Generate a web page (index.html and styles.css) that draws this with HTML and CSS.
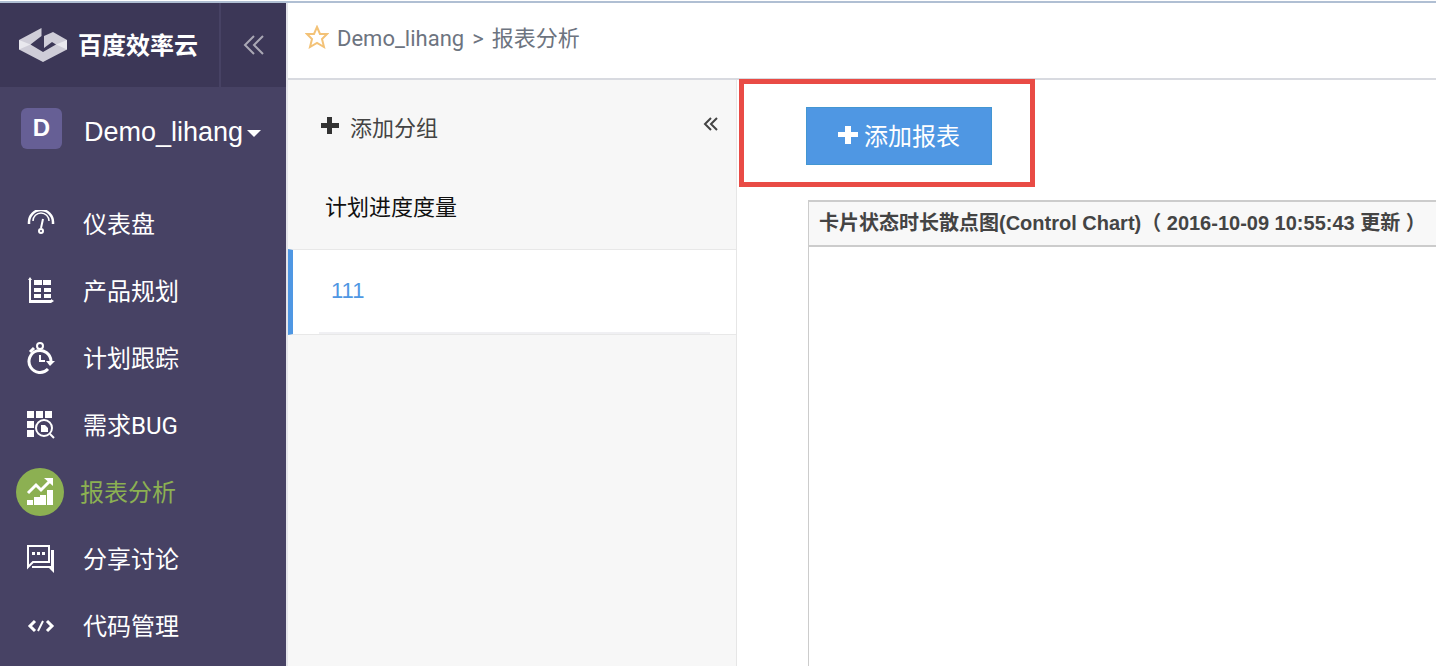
FILE: index.html
```html
<!DOCTYPE html>
<html lang="zh-CN">
<head>
<meta charset="UTF-8">
<meta name="viewport" content="width=device-width, initial-scale=1.0">
<title>报表分析 - 百度效率云</title>
<link rel="stylesheet" href="styles.css">
</head>
<body>
<div class="app">
  <aside class="sidebar">
    <div class="brand">
      <a class="logo" href="#">
        <svg width="48" height="34" viewBox="0 0 48 34">
          <path fill="#cfcdd8" d="M0 12L22.500 0v8L11.500 16.500 24 24l13-7.500-4-2.500-8 6V8l9-4 14 8v9.500L24 34 0 21.500z"/>
          <path fill="#e9e8ee" d="M0 12l11.500 4.500L0 21.500zM48 12l-11 4.500 11 5z"/>
        </svg>
        <span>百度效率云</span>
      </a>
      <button class="fold" aria-label="收起菜单">
        <svg width="22" height="20" viewBox="0 0 22 20" fill="none" stroke="#aaa8b5" stroke-width="2"><path d="M11 1L2 10l9 9M20 1l-9 9 9 9"/></svg>
      </button>
    </div>
    <button class="project">
      <span class="badge">D</span>
      <span class="project-name">Demo_lihang</span>
      <span class="caret"></span>
    </button>
    <nav>
      <ul class="menu">
        <li><a href="#">
          <span class="icon"><svg width="28" height="28" viewBox="0 0 28 28" fill="none" stroke="#fff"><path stroke-width="2.500" d="M2 14v-2a12 12 0 0 1 24 0v2"/><path stroke-width="1.500" d="M6 11a8 8 0 0 1 16 0"/><path stroke-width="2" d="M16 9l-2 9"/><circle cx="14" cy="21" r="2" stroke-width="2"/></svg></span>
          <span>仪表盘</span></a></li>
        <li><a href="#">
          <span class="icon"><svg width="28" height="28" viewBox="0 0 28 28" fill="#fff"><path d="M1 3l2-3 2 3H4v20h20v-1l3 2-3 2H2V3zM7 3h8v5H7zM16 3h8v5h-8zM7 11h7v4H7zM17 11h7v4h-7zM7 17h7v4H7zM17 17h7v4h-7z"/></svg></span>
          <span>产品规划</span></a></li>
        <li><a href="#">
          <span class="icon"><svg width="28" height="32" viewBox="0 0 28 32" fill="none" stroke="#fff"><path stroke-width="3" d="M24 19A11 11 0 1 0 21 27"/><circle cx="13" cy="4" r="3" stroke-width="2"/><path stroke-width="3" d="M3 10l4-4"/><path stroke-width="2" d="M13 13v6h5"/><path fill="#fff" stroke="none" d="M19 19h9l-5 5z"/></svg></span>
          <span>计划跟踪</span></a></li>
        <li><a href="#">
          <span class="icon"><svg width="28" height="28" viewBox="0 0 28 28" fill="#fff"><path d="M0 0h7v7H0zM9 0h7v7H9zM18 0h7v7h-7zM0 10h7v7H0zM0 19h7v7H0zM14 14h4l3 3v4h-7z"/><circle cx="17" cy="17" r="8" fill="none" stroke="#fff" stroke-width="2"/><path fill="none" stroke="#fff" stroke-width="2" d="M23 23l4 4"/></svg></span>
          <span>需求BUG</span></a></li>
        <li class="active"><a href="#">
          <span class="icon"><svg width="28" height="28" viewBox="0 0 28 28" fill="#fff"><path fill="none" stroke="#fff" stroke-width="3" d="M2 15l8-8 5 5 9-9"/><path d="M18 0h9v8zM1 22h6v5H1zM8 19h6v8H8zM14 17h6v10h-6zM21 12h6v15h-6z"/></svg></span>
          <span>报表分析</span></a></li>
        <li><a href="#">
          <span class="icon"><svg width="28" height="28" viewBox="0 0 28 28" fill="#fff"><path fill="none" stroke="#fff" stroke-width="2" d="M1 1h21v16H6l-5 5z"/><path d="M5 7h3v3H5zM10 7h3v3h-3zM15 7h3v3h-3zM24 5h3v23l-5-5H5v-2h19z"/></svg></span>
          <span>分享讨论</span></a></li>
        <li><a href="#">
          <span class="icon"><svg width="28" height="14" viewBox="0 0 28 14" fill="none" stroke="#fff" stroke-width="2"><path stroke-width="3" d="M8 2L3 7l5 5M20 2l5 5-5 5"/><path d="M16 2l-5 10"/></svg></span>
          <span>代码管理</span></a></li>
      </ul>
    </nav>
  </aside>

  <div class="page">
    <header class="crumbs">
      <svg width="24" height="24" viewBox="0 0 24 24" fill="none" stroke="#f3c277" stroke-width="2"><path d="M12 2l3 7h7l-5 5 2 8-7-4-7 4 2-8-5-5h7z"/></svg>
      <div class="path">
        <span>Demo_lihang</span>
        <span>&gt;</span>
        <span>报表分析</span>
      </div>
    </header>
    <div class="columns">
      <section class="groups">
        <div class="groups-top">
          <button class="add-group">
            <svg width="18" height="18" viewBox="0 0 18 18" fill="#333"><path d="M6 0h5v6h7v5h-7v6H6v-6H0V6h6z"/></svg>
            添加分组
          </button>
          <button class="fold-groups" aria-label="收起分组">
            <svg width="16" height="14" viewBox="0 0 16 14" fill="none" stroke="#444" stroke-width="2"><path d="M8 1L2 7l6 6M14 1L8 7l6 6"/></svg>
          </button>
        </div>
        <h2 class="group-title">计划进度度量</h2>
        <a class="group-item" href="#"><span>111</span></a>
      </section>
      <main class="content">
        <div class="add-wrap">
          <button class="add-report">
            <svg width="20" height="20" viewBox="0 0 20 20" fill="#fff"><path d="M7 1h6v6h7v5h-7v7H7v-7H0V7h7z"/></svg>
            添加报表
          </button>
          <div class="mark"></div>
        </div>
        <section class="chart">
          <h3>卡片状态时长散点图(Control Chart)（ 2016-10-09 10:55:43 更新 ）</h3>
        </section>
      </main>
    </div>
  </div>
</div>
</body>
</html>
```
FILE: styles.css
```css
* {
  box-sizing: border-box;
}
body {
  margin: 0;
  padding: 1px 4px 0 0;
  background-color: #fff;
  font-family: "Liberation Sans", "Noto Sans CJK SC", sans-serif;
}
button {
  border: none;
  background: none;
  padding: 0;
  font-family: inherit;
  cursor: pointer;
}
a {
  text-decoration: none;
}
svg {
  flex: none;
}
.app {
  display: flex;
  min-height: calc(100vh - 1px);
  border-top: 2px solid #b0bfd3;
}

/* menu */
.sidebar {
  flex: none;
  width: 286px;
  background-color: #474264;
  color: #fff;
}
.brand {
  display: flex;
  height: 84px;
  background-color: #3c3757;
}
.logo {
  display: flex;
  align-items: center;
  flex: 1;
  gap: 11px;
  padding-left: 19px;
  color: #fff;
  font-size: 24px;
  font-weight: bold;
}
.logo span {
  padding-bottom: 3px;
}
.fold {
  display: flex;
  align-items: center;
  justify-content: center;
  width: 67px;
  border-left: 2px solid #474264;
}
.project {
  display: flex;
  align-items: center;
  width: 100%;
  padding: 21px 0 0 21px;
  color: #fff;
  font-size: 27px;
}
.badge {
  width: 41px;
  height: 41px;
  border-radius: 6px;
  background-color: #665f95;
  font-size: 24px;
  font-weight: bold;
  line-height: 40px;
}
.project-name {
  padding: 7px 4px 0 22px;
}
.caret {
  margin-top: 9px;
  border: 7px solid transparent;
  border-top-color: #fff;
  border-bottom: none;
}
.menu {
  list-style: none;
  margin: 0;
  padding: 41px 0 0 16px;
}
.menu a {
  display: flex;
  align-items: center;
  gap: 19px;
  height: 67px;
  color: #fff;
  font-family: Roboto, "Noto Sans CJK SC", sans-serif;
  font-size: 24px;
}
.menu a span:last-child {
  padding-bottom: 3px;
}
.icon {
  display: flex;
  align-items: center;
  justify-content: center;
  width: 48px;
  height: 48px;
  padding-left: 2px;
}
.active .icon {
  padding-left: 0;
  border-radius: 50%;
  background-color: #8cb052;
}
.menu .active a {
  gap: 16px;
  color: #8cb052;
}

/* page */
.page {
  display: flex;
  flex-direction: column;
  flex: 1;
  min-width: 0;
  border-left: 2px solid #e4e4ea;
}
.crumbs {
  display: flex;
  align-items: center;
  gap: 8px;
  height: 77px;
  padding: 0 0 7px 17px;
  border-bottom: 2px solid #d8dae0;
  color: #6d7480;
  font-family: Roboto, "Noto Sans CJK SC", sans-serif;
  font-size: 22px;
}
.path {
  display: flex;
  align-items: baseline;
  gap: 8px;
  padding-bottom: 2px;
}
.columns {
  display: flex;
  flex: 1;
}
.groups {
  flex: none;
  width: 449px;
  background-color: #f7f7f7;
  border-right: 1px solid #e6e6e6;
}
.groups-top {
  display: flex;
  align-items: center;
  justify-content: space-between;
  height: 96px;
  padding: 0 17px 5px 33px;
}
.add-group {
  display: flex;
  align-items: center;
  gap: 11px;
  color: #444;
  font-size: 22px;
}
.group-title {
  margin: 0;
  padding-left: 37px;
  color: #111;
  font-size: 22px;
  font-weight: normal;
  line-height: 64px;
  padding-bottom: 9px;
}
.group-item {
  display: block;
  padding: 0 26px;
  border: 1px solid #e8e8e8;
  border-left: 5px solid #4f97e3;
  border-right: none;
  background-color: #fff;
  color: #4f97e3;
  font-size: 22px;
  line-height: 82px;
}
.group-item span {
  display: block;
  padding-left: 12px;
  border-bottom: 2px solid #f0f0f3;
}
.content {
  display: flex;
  flex-direction: column;
  flex: 1;
  min-width: 0;
  padding: 27px 0 0 69px;
}
.add-wrap {
  position: relative;
  align-self: flex-start;
}
.add-report {
  display: flex;
  align-items: center;
  justify-content: center;
  gap: 6px;
  width: 186px;
  height: 58px;
  padding-bottom: 3px;
  border: 1px solid #4396d2;
  background-color: #4f97e3;
  color: #fff;
  font-size: 24px;
}
/* red frame round the button */
.mark {
  position: absolute;
  inset: -28px -43px -22px -67px;
  border: 5px solid #e94b45;
  pointer-events: none;
}
.chart {
  flex: 1;
  margin: 35px 0 0 2px;
  border-top: 2px solid #ccc;
  border-left: 1px solid #ccc;
}
.chart h3 {
  margin: 0;
  padding-left: 10px;
  border-bottom: 2px solid #ccc;
  background-color: #f8f8f8;
  color: #444;
  font-size: 20px;
  line-height: 43px;
  white-space: nowrap;
  overflow: hidden;
}
```
